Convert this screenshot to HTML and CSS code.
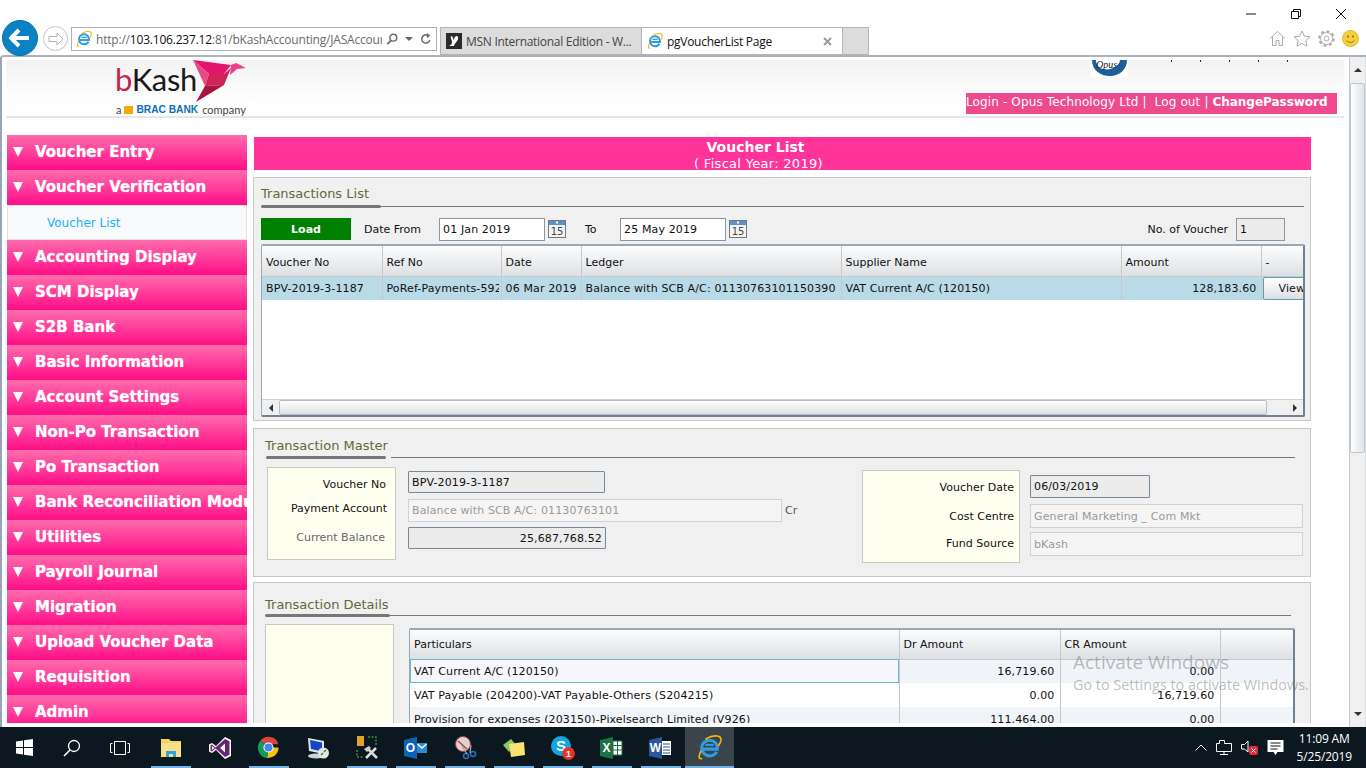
FILE: index.html
```html
<!DOCTYPE html>
<html lang="en">
<head>
  <meta charset="UTF-8" />
  <title>pgVoucherList Page</title>
  <link rel="stylesheet" href="styles.css">
</head>
<body>
  <svg class="defs" width="0" height="0" aria-hidden="true">
    <symbol id="ie" viewBox="0 0 24 24">
      <path d="M6 13.500h13.500c.4-5-3-8.500-7.300-8.500-4.400 0-7.700 3.300-7.700 7.500s3.300 7.500 7.700 7.500c3 0 5.300-1.300 6.600-3.800" fill="none" stroke="#2f9be3" stroke-width="3"/>
      <path d="M8 9.500h8" stroke="#2f9be3" stroke-width="2"/>
      <path d="M4 15C1 21 1.500 23.500 5 22.500M8 4c8-4.500 15-4 15 .5 0 2-1 4-2.500 6" fill="none" stroke="#f4b400" stroke-width="1.600"/>
    </symbol>
    <symbol id="cal" viewBox="0 0 18 18">
      <rect x=".5" y=".5" width="17" height="17" fill="#f4f4f4" stroke="#777"/>
      <rect x="1" y="1" width="16" height="4" fill="#5b93c7"/>
      <rect x="8" y="1.500" width="2" height="2" fill="#fff"/>
      <text x="9" y="15" text-anchor="middle" class="cal-num">15</text>
    </symbol>
  </svg>

  <header class="chrome">
    <div class="caption">
      <svg width="12" height="12" viewBox="0 0 12 12"><path d="M1 6h10" stroke="#111"/></svg>
      <svg width="12" height="12" viewBox="0 0 12 12"><path d="M1.500 3.500h7v7h-7zM3.500 3.500v-2h7v7h-2" fill="none" stroke="#111"/></svg>
      <svg width="12" height="12" viewBox="0 0 12 12"><path d="M1 1l10 10M11 1L1 11" stroke="#111"/></svg>
    </div>
    <div class="toolbar">
      <div class="back">
        <svg width="22" height="20" viewBox="0 0 22 20"><path d="M10 2l-8 8 8 8M2 10h18" fill="none" stroke="#fff" stroke-width="4"/></svg>
      </div>
      <div class="forward">
        <svg width="16" height="14" viewBox="0 0 16 14"><path d="M9 1l6 6-6 6v-3.500H1v-5h8z" fill="#fff" stroke="#b4b4b4"/></svg>
      </div>
      <div class="address">
        <svg class="addr-ie" width="16" height="16"><use href="#ie"/></svg>
        <span class="url">http://<b>103.106.237.12</b>:81/bKashAccounting/JASAccour</span>
        <svg width="14" height="14" viewBox="0 0 14 14"><circle cx="8.500" cy="5.500" r="4" fill="none" stroke="#666" stroke-width="1.600"/><path d="M6 8.500l-4.500 4.500" stroke="#666" stroke-width="2"/></svg>
        <span class="addr-caret"></span>
        <svg width="14" height="14" viewBox="0 0 14 14"><path d="M11.500 8A4.800 4.800 0 1 1 9.500 3" fill="none" stroke="#666" stroke-width="1.700"/><path d="M8 0v6l4-3z" fill="#666"/></svg>
      </div>
      <div class="tabs">
        <div class="tab">
          <svg width="16" height="16" viewBox="0 0 16 16"><rect width="16" height="16" fill="#2b2b2b"/><path d="M3 13c2-1 3-2 3-4S4 5 5 3c2 0 2 3 3 4 0-2 1-4 3-4 2 1 1 4 0 5-1 2-3 3-3 5z" fill="#fff"/></svg>
          <span>MSN International Edition - W...</span>
        </div>
        <div class="tab tab-active">
          <svg width="16" height="16"><use href="#ie"/></svg>
          <span>pgVoucherList Page</span>
          <svg class="tab-close" width="9" height="9" viewBox="0 0 9 9"><path d="M1 1l7 7M8 1L1 8" stroke="#999" stroke-width="1.800"/></svg>
        </div>
        <div class="tab tab-new"></div>
      </div>
      <div class="tools">
        <svg width="17" height="17" viewBox="0 0 17 17"><path d="M1 8.500L8.500 1.500 16 8.500M3.500 7v8.500h3.500v-5h3v5h3.500V7" fill="none" stroke="#aaa"/></svg>
        <svg width="18" height="17" viewBox="0 0 18 17"><path d="M9 1l2.400 5.200 5.600.6-4.200 3.800 1.200 5.600L9 13.400l-5 2.800 1.200-5.600L1 6.800l5.600-.6z" fill="none" stroke="#aaa"/></svg>
        <svg width="17" height="17" viewBox="0 0 17 17"><circle cx="8.500" cy="8.500" r="2.500" fill="none" stroke="#aaa"/><circle cx="8.500" cy="8.500" r="6" fill="none" stroke="#aaa" stroke-width="1"/><circle cx="8.500" cy="8.500" r="7.300" fill="none" stroke="#aaa" stroke-width="2" stroke-dasharray="2.900 2.800"/></svg>
        <svg width="17" height="17" viewBox="0 0 17 17"><circle cx="8.500" cy="8.500" r="8" fill="#f6cf3e" stroke="#e3b52a"/><circle cx="6" cy="6.500" r="1" fill="#8a6d10"/><circle cx="11" cy="6.500" r="1" fill="#8a6d10"/><path d="M4.500 10.500c2 2.500 6 2.500 8 0" fill="none" stroke="#8a6d10"/></svg>
      </div>
    </div>
  </header>

  <div class="viewport">
    <div class="page">
      <div class="site-head">
        <div class="logo">
          <div class="logo-top">
            <span class="logo-word"><em>b</em>Kash</span>
            <svg width="56" height="43" viewBox="0 0 56 43">
              <path d="M2 0l38 5-7 9H18z" fill="#e3146e"/>
              <path d="M40 5l5-2 10 5-9 1-7 6z" fill="#ee3f86"/>
              <path d="M2 0l16 14-4 12z" fill="#e94a80"/>
              <path d="M14 26l4-12h15l7-6-7 17z" fill="#cf2359"/>
              <path d="M14 26l19-1L5 42z" fill="#a81442"/>
            </svg>
          </div>
          <div class="logo-sub">a <i class="brac-mark"></i><b>BRAC BANK</b> company</div>
        </div>
        <div class="head-right">
          <div class="opus-row">
            <svg width="38" height="17" viewBox="0 0 38 17"><rect width="38" height="17" fill="#fff"/><path d="M2 0C2 10 10 16 20 16 30 16 37 9 37 0H30C30 5 22 11 13 9 8 8 6 4 6 0z" fill="#1d5f96"/><text x="6" y="8" class="opus-text">Opus</text></svg>
            <span class="opus-cut"></span>
          </div>
          <div class="login-bar">Login - Opus Technology Ltd |&nbsp; Log out | <b>ChangePassword</b></div>
        </div>
      </div>

      <div class="page-body">
        <nav class="menu">
          <a class="menu-item">Voucher Entry</a>
          <a class="menu-item">Voucher Verification</a>
          <a class="submenu-item">Voucher List</a>
          <a class="menu-item">Accounting Display</a>
          <a class="menu-item">SCM Display</a>
          <a class="menu-item">S2B Bank</a>
          <a class="menu-item">Basic Information</a>
          <a class="menu-item">Account Settings</a>
          <a class="menu-item">Non-Po Transaction</a>
          <a class="menu-item">Po Transaction</a>
          <a class="menu-item">Bank Reconciliation Module</a>
          <a class="menu-item">Utilities</a>
          <a class="menu-item">Payroll Journal</a>
          <a class="menu-item">Migration</a>
          <a class="menu-item">Upload Voucher Data</a>
          <a class="menu-item">Requisition</a>
          <a class="menu-item">Admin</a>
        </nav>

        <main class="content">
          <div class="page-title">
            <strong>Voucher List</strong>
            <span>( Fiscal Year: 2019)</span>
          </div>

          <section class="panel panel-list">
            <h2>Transactions List</h2>
            <div class="rule"><i></i><b></b></div>
            <div class="filter-row">
              <button class="btn-load">Load</button>
              <label class="lbl-from">Date From</label>
              <div class="field date-field">01 Jan 2019</div>
              <svg class="cal-icon" width="18" height="18"><use href="#cal"/></svg>
              <label class="lbl-to">To</label>
              <div class="field date-field">25 May 2019</div>
              <svg class="cal-icon" width="18" height="18"><use href="#cal"/></svg>
              <label class="lbl-count">No. of Voucher</label>
              <div class="field count-field">1</div>
            </div>
            <div class="grid list-grid">
              <div class="grid-scroll">
                <table>
                  <colgroup>
                    <col style="width:120px"><col style="width:119px"><col style="width:80px"><col style="width:260px"><col style="width:280px"><col style="width:140px"><col style="width:42px">
                  </colgroup>
                  <thead>
                    <tr><th>Voucher No</th><th>Ref No</th><th>Date</th><th>Ledger</th><th>Supplier Name</th><th>Amount</th><th>-</th></tr>
                  </thead>
                  <tbody>
                    <tr class="row-selected">
                      <td>BPV-2019-3-1187</td>
                      <td><span class="clip">PoRef-Payments-592</span></td>
                      <td>06 Mar 2019</td>
                      <td>Balance with SCB A/C: 01130763101150390</td>
                      <td>VAT Current A/C (120150)</td>
                      <td class="num">128,183.60</td>
                      <td class="cell-btn"><span class="btn-view">View</span></td>
                    </tr>
                  </tbody>
                </table>
              </div>
              <div class="hscroll">
                <span class="hscroll-btn"><i class="arrow-left"></i></span>
                <span class="hscroll-thumb"></span>
                <span class="hscroll-btn"><i class="arrow-right"></i></span>
              </div>
            </div>
          </section>

          <section class="panel panel-master">
            <h2>Transaction Master</h2>
            <div class="rule rule-gap"><i></i><b></b></div>
            <div class="master-row">
              <div class="master-group">
                <div class="info-box box-left">
                  <p class="l1">Voucher No</p>
                  <p class="l2">Payment Account</p>
                  <p class="l3 muted">Current Balance</p>
                </div>
                <div class="fields-left">
                  <div class="field locked w197">BPV-2019-3-1187</div>
                  <div class="field-line">
                    <div class="field disabled w374">Balance with SCB A/C: 01130763101</div>
                    <span class="cr">Cr</span>
                  </div>
                  <div class="field locked w198 num">25,687,768.52</div>
                </div>
              </div>
              <div class="master-group group-right">
                <div class="info-box box-right">
                  <p class="r1">Voucher Date</p>
                  <p class="r2">Cost Centre</p>
                  <p class="r3">Fund Source</p>
                </div>
                <div class="fields-right">
                  <div class="field locked w120">06/03/2019</div>
                  <div class="field disabled w273">General Marketing _ Com Mkt</div>
                  <div class="field disabled w273">bKash</div>
                </div>
              </div>
            </div>
          </section>

          <section class="panel panel-details">
            <h2>Transaction Details</h2>
            <div class="rule"><i></i><b></b></div>
            <div class="details-row">
              <div class="info-box box-details"></div>
              <div class="grid details-grid">
                <table>
                  <colgroup>
                    <col style="width:489px"><col style="width:161px"><col style="width:160px"><col style="width:74px">
                  </colgroup>
                  <thead>
                    <tr><th>Particulars</th><th>Dr Amount</th><th>CR Amount</th><th></th></tr>
                  </thead>
                  <tbody>
                    <tr class="row-alt">
                      <td class="cell-focus">VAT Current A/C (120150)</td>
                      <td class="num">16,719.60</td><td class="num">0.00</td><td></td>
                    </tr>
                    <tr>
                      <td>VAT Payable (204200)-VAT Payable-Others (S204215)</td>
                      <td class="num">0.00</td><td class="num">16,719.60</td><td></td>
                    </tr>
                    <tr class="row-alt">
                      <td>Provision for expenses (203150)-Pixelsearch Limited (V926)</td>
                      <td class="num">111,464.00</td><td class="num">0.00</td><td></td>
                    </tr>
                  </tbody>
                </table>
              </div>
            </div>
          </section>
        </main>
      </div>
    </div>

    <div class="vscroll">
      <span class="vscroll-btn"><i class="arrow-up"></i></span>
      <span class="vscroll-thumb"></span>
      <span class="vscroll-btn vscroll-down"><i class="arrow-down"></i></span>
    </div>

    <div class="activate">
      <div class="activate-title">Activate Windows</div>
      <div class="activate-sub">Go to Settings to activate Windows.</div>
    </div>
  </div>

  <footer class="taskbar">
    <div class="task-cell">
      <svg width="17" height="17" viewBox="0 0 17 17"><path d="M0 2.500l7-1v6.500H0zM8 1.300L17 0v8H8zM0 9h7v6.500l-7-1zM8 9h9v8l-9-1.300z" fill="#fff"/></svg>
    </div>
    <div class="task-cell">
      <svg width="18" height="18" viewBox="0 0 18 18"><circle cx="11" cy="7" r="5.500" fill="none" stroke="#fff" stroke-width="1.300"/><path d="M7 11l-6 6" stroke="#fff" stroke-width="1.600"/></svg>
    </div>
    <div class="task-cell">
      <svg width="20" height="14" viewBox="0 0 20 14"><path d="M4.500.5h11v13h-11zM2.500 2.500H.5v9h2M17.500 2.500h2v9h-2" fill="none" stroke="#fff"/></svg>
    </div>
    <div class="pinned">
      <div class="task-cell open">
        <svg width="22" height="20" viewBox="0 0 22 20"><path d="M1 1h8l2 2h10v16H1z" fill="#f6d365"/><path d="M1 5h20v14H1z" fill="#fbe08a"/><path d="M6 19v-6h10v6h-3v-3H9v3z" fill="#2aa5e0"/></svg>
      </div>
      <div class="task-cell">
        <svg width="24" height="24" viewBox="0 0 24 24"><path d="M17 1l6 3v16l-6 3L8 14l-4 3-3-1.500v-7L4 7l4 3z" fill="#fff"/><path d="M17 3l4.500 2.200v13.600L17 21 7.500 12.500 4 15.500 2.500 14.700V9.300L4 8.500l3.500 3z" fill="#68217a"/><path d="M17 7.500v9L12 12zM4 10l2.500 2L4 14z" fill="#fff"/></svg>
      </div>
      <div class="task-cell open">
        <svg width="23" height="23" viewBox="0 0 24 24"><path d="M12 12L3.500 5A11 11 0 0 1 22.500 8.500H12z" fill="#db4437"/><path d="M12 12h10.500A11 11 0 0 1 10.500 23z" fill="#f4c20d"/><path d="M12 12l-1.500 11A11 11 0 0 1 3.500 5z" fill="#0f9d58"/><circle cx="12" cy="12" r="5.300" fill="#fff"/><circle cx="12" cy="12" r="4.200" fill="#4285f4"/></svg>
      </div>
      <div class="task-cell">
        <svg width="24" height="24" viewBox="0 0 24 24"><path d="M2 2l16 3v13L3 15z" fill="#dfe3ea"/><path d="M4 4l12 2.500v9L5 13z" fill="#1546c2"/><ellipse cx="10" cy="20" rx="8" ry="2.500" fill="#cfd3d8"/><circle cx="17.500" cy="17" r="5.500" fill="#e4e6e2"/><path d="M15 19l2-2M18 16l2-2" stroke="#2c8f3c" stroke-width="1.500"/></svg>
      </div>
      <div class="task-cell open">
        <svg width="24" height="26" viewBox="0 0 24 26"><rect x="2" y="1" width="7" height="10" fill="#e0a526"/><path d="M2 15v7h7M13 2h8v8" fill="none" stroke="#3b8f3b" stroke-dasharray="2 1.500" stroke-width="1.500"/><path d="M12 13l10 10M21 13l-10 10" stroke="#ddd" stroke-width="2.500"/><path d="M9 14l5-3 2 2-4 4z" fill="#ccc"/></svg>
      </div>
      <div class="task-cell open">
        <svg width="23" height="22" viewBox="0 0 23 22"><path d="M0 3l13-3v22L0 19z" fill="#0a64b4"/><text x="6.500" y="15" text-anchor="middle" class="tile-letter">O</text><rect x="13" y="6" width="10" height="10" fill="#2a8ad4"/><path d="M13.500 7l4.500 4 4.500-4" fill="none" stroke="#fff" stroke-width="1.500"/></svg>
      </div>
      <div class="task-cell open">
        <svg width="24" height="24" viewBox="0 0 24 24"><circle cx="10" cy="8" r="7.500" fill="#d8d4d4" stroke="#b33"/><path d="M5 5l9 8" stroke="#c33" stroke-width="1.500"/><circle cx="13" cy="20" r="2.500" fill="none" stroke="#2a6fb5" stroke-width="1.500"/><circle cx="20" cy="18" r="2.500" fill="none" stroke="#2a6fb5" stroke-width="1.500"/><path d="M9 10l5 8M18 9l-1 8" stroke="#8aa" stroke-width="1.300"/></svg>
      </div>
      <div class="task-cell open">
        <svg width="24" height="20" viewBox="0 0 24 20"><path d="M1 7l8-6 5 6-7 7z" fill="#8cc56b"/><path d="M7 6l15-2 1 13-14 2z" fill="#fbe36f"/></svg>
      </div>
      <div class="task-cell open">
        <svg width="26" height="26" viewBox="0 0 26 26"><circle cx="11" cy="11" r="10" fill="#12a5e0"/><text x="11" y="16" text-anchor="middle" class="tile-letter big">S</text><circle cx="18.500" cy="18.500" r="6.500" fill="#e8322b"/><text x="18.500" y="22" text-anchor="middle" class="tile-letter small">1</text></svg>
      </div>
      <div class="task-cell open">
        <svg width="23" height="22" viewBox="0 0 23 22"><path d="M0 3l13-3v22L0 19z" fill="#1e7145"/><text x="6.500" y="15" text-anchor="middle" class="tile-letter">X</text><path d="M13 4h9v14h-9z" fill="#fff" stroke="#1e7145"/><path d="M13 8.500h9M13 13h9M17.500 4v14" stroke="#1e7145"/></svg>
      </div>
      <div class="task-cell open">
        <svg width="23" height="22" viewBox="0 0 23 22"><path d="M0 3l13-3v22L0 19z" fill="#2b579a"/><text x="6.500" y="15" text-anchor="middle" class="tile-letter">W</text><path d="M13 4h9v14h-9z" fill="#fff"/><path d="M14 7h7M14 10h7M14 13h7M14 16h7" stroke="#2b579a"/></svg>
      </div>
      <div class="task-cell open active">
        <svg width="25" height="25"><use href="#ie"/></svg>
      </div>
    </div>
    <div class="tray">
      <svg width="12" height="7" viewBox="0 0 12 7"><path d="M.5 6.500L6 1l5.500 5.500" fill="none" stroke="#fff"/></svg>
      <svg width="16" height="15" viewBox="0 0 16 15"><path d="M.5 3.500h3V.5h5v3h7v8h-15zM8 11.500v3M4 14.500h8" fill="none" stroke="#fff"/></svg>
      <svg width="17" height="15" viewBox="0 0 17 15"><path d="M.5 4.500h3L7 1v11L3.500 9h-3z" fill="none" stroke="#fff"/><rect x="8" y="6" width="9" height="9" rx="2" fill="#e02b3a"/><path d="M10.500 8.500l4 4M14.500 8.500l-4 4" stroke="#fff"/></svg>
      <svg width="17" height="16" viewBox="0 0 16 16"><path d="M0 0h16v12h-6l-2 3-2-3H0z" fill="#fff"/><path d="M3 3h10M3 6h10M3 9h7" stroke="#0d1a22"/></svg>
      <div class="clock">
        <span>11:09 AM</span>
        <span>5/25/2019</span>
      </div>
    </div>
  </footer>
</body>
</html>
```

FILE: styles.css
```css
* {
  box-sizing: border-box;
}

html,
body {
  margin: 0;
  height: 768px;
  overflow: hidden;
}

body {
  width: 1366px;
  display: flex;
  flex-direction: column;
  background: #fff;
  font-family: "DejaVu Sans", Verdana, sans-serif;
  font-size: 11px;
  color: #111;
}

.defs {
  position: absolute;
}

.cal-num {
  font: 10px "DejaVu Sans", sans-serif;
  fill: #444;
}

/* browser chrome */
.chrome {
  height: 55px;
  flex: none;
  font-family: "Open Sans", sans-serif;
}

.caption {
  height: 20px;
  display: flex;
  justify-content: flex-end;
  align-items: flex-end;
  gap: 33px;
  padding-right: 19px;
}

.toolbar {
  height: 35px;
  display: flex;
  position: relative;
}

.back {
  width: 36px;
  height: 36px;
  margin-left: 2px;
  border-radius: 50%;
  background: #0a82c4;
  border: 1px solid #0a6ea6;
  display: flex;
  align-items: center;
  justify-content: center;
  z-index: 2;
}

.forward {
  width: 25px;
  height: 25px;
  margin: 6px 0 0 5px;
  border-radius: 50%;
  border: 1px solid #c4c4c4;
  display: flex;
  align-items: center;
  justify-content: center;
}

.address {
  width: 366px;
  height: 24px;
  margin: 7px 0 0 3px;
  border: 1px solid #b0b0b0;
  display: flex;
  align-items: center;
  padding: 0 4px;
  gap: 4px;
  font-size: 12px;
  color: #6b6b6b;
  overflow: hidden;
}

.addr-ie {
  flex: none;
}

.url {
  width: 286px;
  flex: none;
  white-space: nowrap;
  overflow: hidden;
  letter-spacing: -.2px;
}

.url b {
  font-weight: 400;
  color: #111;
}

.addr-caret {
  width: 0;
  height: 0;
  border: 4px solid transparent;
  border-top-color: #666;
  border-bottom: 0;
  margin: 0 3px;
}

.tabs {
  margin: 7px 0 0 3px;
  height: 28px;
  display: flex;
  border-bottom: 1px solid #b5b5b5;
}

.tab {
  width: 201px;
  border: 1px solid #b5b5b5;
  border-bottom: 0;
  border-right: 0;
  background: #dcdcdc;
  display: flex;
  align-items: center;
  gap: 4px;
  padding-left: 5px;
  font-size: 12px;
  letter-spacing: -.28px;
  color: #444;
  white-space: nowrap;
}

.tab-active {
  background: #fff;
  color: #111;
  position: relative;
}

.tab-close {
  margin-left: auto;
  margin-right: 10px;
}

.tab-new {
  width: 27px;
  border-right: 1px solid #b5b5b5;
}

.tools {
  margin-left: auto;
  padding: 10px 7px 0 0;
  display: flex;
  gap: 7px;
  align-items: flex-start;
}

/* page area */
.viewport {
  height: 672px;
  flex: none;
  display: flex;
  position: relative;
  border-top: 2px solid #aab3bc;
  border-left: 2px solid #97a5b5;
  border-top-left-radius: 4px;
}

.page {
  width: 1347px;
  flex: none;
  padding-top: 3px;
  overflow: hidden;
}

.site-head {
  height: 58px;
  width: 1338px;
  margin-left: 4px;
  display: flex;
  justify-content: space-between;
  background: linear-gradient(#f3f3f3, #fff 85%);
  border-bottom: 2px solid #e6e6e6;
}

.logo {
  margin-left: 109px;
  height: 56px;
  font-family: "Lato", sans-serif;
}

.logo-top {
  height: 43px;
  display: flex;
  overflow: hidden;
}

.logo-word {
  font-family: "Lato", sans-serif;
  font-size: 31px;
  line-height: 39px;
  letter-spacing: -.3px;
  color: #1a1a1a;
  width: 76px;
}

.logo-word em {
  font-style: normal;
  color: #c2264d;
}

.logo-sub {
  display: flex;
  align-items: center;
  gap: 3px;
  font-size: 11px;
  line-height: 12px;
  color: #444;
  margin: 1px 0 0 1px;
  white-space: nowrap;
}

.logo-sub b {
  font-family: "Liberation Sans", sans-serif;
  font-size: 10.200px;
  color: #0a6fb7;
  margin-right: 1px;
}

.brac-mark {
  width: 9px;
  height: 8px;
  background: #f2a900;
}

.head-right {
  margin-right: 7px;
  width: 371px;
}

.opus-row {
  height: 33px;
  display: flex;
  align-items: flex-start;
  padding-left: 124px;
}

.opus-text {
  font: italic 10px "Liberation Serif", serif;
  fill: #222;
}

.opus-cut {
  width: 135px;
  height: 2px;
  margin-left: 43px;
  background-image: repeating-linear-gradient(90deg, #222 0 1px, transparent 1px 29px);
}

.login-bar {
  height: 21px;
  background: #ef4a8e;
  color: #fff;
  font-size: 12px;
  letter-spacing: .13px;
  line-height: 18px;
  white-space: pre;
}

.login-bar b {
  font-weight: 700;
  letter-spacing: -.03px;
}

.page-body {
  display: flex;
  height: 588px;
  margin-top: 17px;
  margin-left: 5px;
  overflow: hidden;
}

/* left menu */
.menu {
  width: 240px;
  flex: none;
}

.menu-item {
  display: block;
  height: 35px;
  padding-left: 28px;
  position: relative;
  background: linear-gradient(#ff6cab, #ff3d9b 50%, #ff0e86);
  color: #fff;
  font-size: 15px;
  font-weight: 700;
  line-height: 35px;
  white-space: nowrap;
  overflow: hidden;
  text-shadow: 0 0 1px #ffd0e4;
}

.menu-item::before {
  content: "";
  position: absolute;
  left: 6px;
  top: 12px;
  border-style: solid;
  border-width: 10px 5px 0;
  border-color: #fff transparent transparent;
}

.submenu-item {
  display: block;
  height: 35px;
  padding-left: 39px;
  background: #f8f9fb;
  border: 1px solid #e2e2e2;
  color: #1ab2f5;
  font-size: 12px;
  line-height: 35px;
}

/* content */
.content {
  width: 1058px;
  margin-left: 6px;
  flex: none;
}

.page-title {
  height: 33px;
  margin: 2px 0 0 1px;
  padding-right: 54px;
  background: #ff3399;
  color: #fff;
  text-align: center;
  display: flex;
  flex-direction: column;
  overflow: hidden;
}

.page-title strong {
  font-size: 14px;
  line-height: 20px;
}

.page-title span {
  padding-left: 6px;
  font-size: 13px;
  line-height: 13px;
  letter-spacing: .3px;
}

.panel {
  background: #f0f0f0;
  border: 1px solid #c8c8c8;
  margin-top: 7px;
  padding: 7px 6px 0 7px;
}

.panel h2 {
  margin: 0;
  font-size: 13px;
  font-weight: 400;
  line-height: 17px;
  color: #5f6b35;
}

.rule {
  height: 3px;
  margin-top: 3px;
  display: flex;
  align-items: center;
}

.rule i {
  width: 120px;
  height: 3px;
  background: #777;
  border-radius: 2px;
}

.rule b {
  flex: 1;
  height: 1px;
  background: #777;
}

.rule-gap {
  margin-left: 1px;
  margin-right: 8px;
}

.rule-gap i {
  margin-right: 5px;
}

.field {
  height: 23px;
  background: #fff;
  border: 1px solid #8697a8;
  padding-left: 3px;
  font-size: 11px;
  letter-spacing: .13px;
  line-height: 21px;
  white-space: nowrap;
  overflow: hidden;
}

.field.num {
  text-align: right;
  padding-right: 3px;
}

.locked {
  background: #ececec;
  border-color: #76899b;
  border-radius: 1px;
}

.disabled {
  background: #f5f5f5;
  border-color: #d2d2d2;
  color: #9a9a9a;
}

/* transactions list */
.panel-list {
  height: 244px;
}

.filter-row {
  height: 24px;
  margin-top: 9px;
  display: flex;
  align-items: center;
}

.btn-load {
  width: 90px;
  height: 22px;
  padding: 0;
  background: #008000;
  border: 0;
  color: #fff;
  font: 700 11px "DejaVu Sans", sans-serif;
}

.lbl-from {
  margin-left: 13px;
  width: 75px;
}

.date-field {
  width: 106px;
}

.cal-icon {
  margin-left: 3px;
  flex: none;
}

.lbl-to {
  margin-left: 19px;
  width: 35px;
}

.lbl-count {
  margin-left: auto;
  margin-right: 8px;
  white-space: nowrap;
}

.count-field {
  width: 49px;
  background: #ececec;
  margin-right: 19px;
}

.grid {
  background: #fff;
  border-width: 2px 2px 2px 1px;
  border-style: solid;
  border-color: #9aa8b6 #6f8192 #6f8192 #9aa8b6;
  border-radius: 2px;
}

.grid table {
  border-collapse: collapse;
  table-layout: fixed;
}

.grid th {
  height: 30px;
  padding: 0 4px;
  background: linear-gradient(#fbfcfc, #dde0e3);
  border-right: 1px solid #c8c8c8;
  border-bottom: 1px solid #c8c8c8;
  text-align: left;
  font-size: 11px;
  font-weight: 400;
}

.grid td {
  height: 24px;
  padding: 0 4px;
  border-right: 1px solid #c8c8c8;
  letter-spacing: .13px;
  white-space: nowrap;
  overflow: hidden;
}

.grid td.num {
  text-align: right;
}

.list-grid {
  width: 1044px;
  height: 173px;
  margin-top: 3px;
  display: flex;
  flex-direction: column;
}

.list-grid table {
  width: 1041px;
}

.list-grid th {
  padding-top: 3px;
}

.clip {
  display: block;
  width: 112px;
  overflow: hidden;
}

.grid-scroll {
  flex: 1;
  overflow: hidden;
}

.row-selected td {
  background: #b9dbe7;
}

td.cell-btn {
  padding: 0 0 0 1px;
  border-right: 0;
}

.btn-view {
  display: block;
  width: 48px;
  height: 23px;
  padding-left: 15px;
  background: linear-gradient(#fff, #dcdfe2);
  border: 1px solid #5d9db5;
  border-radius: 2px;
  line-height: 21px;
}

.hscroll {
  height: 16px;
  display: flex;
  align-items: stretch;
  background: #f0f0f0;
  border-top: 1px solid #d0d0d0;
}

.hscroll-btn {
  width: 17px;
  flex: none;
  display: flex;
  align-items: center;
  justify-content: center;
}

.hscroll-thumb {
  flex: 1;
  margin-right: 19px;
  background: linear-gradient(#fff, #dde1e4);
  border: 1px solid #b8bec4;
  border-radius: 2px;
}

.arrow-left,
.arrow-right,
.arrow-up,
.arrow-down {
  width: 0;
  height: 0;
  border: 4px solid transparent;
}

.arrow-left {
  border-right-color: #333;
  border-left: 0;
}

.arrow-right {
  border-left-color: #333;
  border-right: 0;
}

.arrow-up {
  border-bottom-color: #333;
  border-top: 0;
}

.arrow-down {
  border-top-color: #333;
  border-bottom: 0;
}

/* transaction master */
.panel-master {
  height: 149px;
  padding: 8px 7px 0 11px;
}

.panel-master .rule {
  margin-top: 2px;
}

.master-row {
  display: flex;
  justify-content: space-between;
  margin-top: 8px;
}

.master-group {
  display: flex;
}

.info-box {
  background: #fffff0;
  border: 1px solid #c8c8c8;
}

.info-box p {
  margin: 0;
  text-align: right;
  line-height: 16px;
}

.box-left {
  width: 129px;
  height: 93px;
  margin-left: 2px;
  padding: 9px 9px 0 0;
}

.box-left .l2 {
  margin-top: 8px;
  margin-right: -1px;
}

.box-left .l3 {
  margin-top: 13px;
  margin-right: 1px;
}

.muted {
  color: #666;
}

.fields-left {
  margin-left: 12px;
  padding-top: 4px;
}

.field-line {
  display: flex;
  align-items: center;
  margin: 6px 0 5px;
}

.cr {
  margin-left: 3px;
  color: #555;
}

.w197 {
  width: 197px;
  height: 22px;
}

.w198 {
  width: 198px;
  height: 22px;
}

.w374 {
  width: 374px;
}

.group-right {
  padding-top: 3px;
}

.box-right {
  width: 158px;
  height: 93px;
  padding: 9px 5px 0 0;
}

.box-right .r2 {
  margin-top: 13px;
}

.box-right .r3 {
  margin-top: 11px;
}

.fields-right {
  margin-left: 10px;
  padding-top: 5px;
}

.w120 {
  width: 120px;
}

.w273 {
  width: 273px;
  height: 24px;
  line-height: 23px;
  margin-top: 6px;
}

.w273 + .w273 {
  margin-top: 4px;
}

/* transaction details */
.panel-details {
  height: 200px;
  margin-top: 5px;
  padding: 13px 19px 0 11px;
}

.panel-details .rule {
  margin-top: 1px;
}

.panel-details .rule i {
  width: 125px;
}

.details-row {
  display: flex;
  margin-top: 7px;
}

.box-details {
  width: 129px;
  height: 140px;
  flex: none;
}

.details-grid {
  width: 886px;
  height: 130px;
  flex: none;
  margin: 4px 0 0 15px;
  overflow: hidden;
}

.details-grid table {
  width: 884px;
}

.details-grid th {
  height: 29px;
}

.grid.details-grid td.num {
  padding-right: 5px;
}

.row-alt td {
  background: #f0f3f8;
}

td.cell-focus {
  background: #f5f7fb;
  outline: 1px solid #66b8cc;
  outline-offset: -1px;
  overflow: visible;
}

/* page scrollbar */
.vscroll {
  width: 17px;
  flex: none;
  display: flex;
  flex-direction: column;
  background: #f0f0f0;
  border-left: 1px solid #bfc6cc;
  border-right: 1px solid #dcdfe2;
}

.vscroll-btn {
  height: 26px;
  flex: none;
  display: flex;
  align-items: center;
  justify-content: center;
}

.vscroll-thumb {
  height: 370px;
  background: linear-gradient(90deg, #fff, #dfe3e7);
  border: 1px solid #c0c7cd;
  border-radius: 2px;
}

.vscroll-down {
  margin-top: auto;
}

.activate {
  position: absolute;
  left: 1071px;
  top: 593px;
  color: rgba(110, 110, 110, .45);
  font-family: "Open Sans", sans-serif;
  white-space: nowrap;
  pointer-events: none;
}

.activate-title {
  font-size: 19px;
  line-height: 24px;
}

.activate-sub {
  font-size: 14.400px;
  line-height: 22px;
}

/* taskbar */
.taskbar {
  height: 41px;
  flex: none;
  display: flex;
  background: #0c1820;
  color: #fff;
  font-family: "Open Sans", sans-serif;
}

.task-cell {
  width: 48px;
  height: 41px;
  display: flex;
  align-items: center;
  justify-content: center;
  flex: none;
}

.pinned {
  display: flex;
  margin-left: 2px;
}

.pinned .task-cell {
  width: 49px;
}

.pinned .open {
  background: linear-gradient(#6cb3e6, #6cb3e6) center bottom / 40px 2px no-repeat;
}

.pinned .active {
  background: linear-gradient(#6cb3e6, #6cb3e6) center bottom / 49px 2px no-repeat, #3a444b;
}

.tile-letter {
  font: 700 12px "Liberation Sans", sans-serif;
  fill: #fff;
}

.tile-letter.big {
  font-size: 15px;
}

.tile-letter.small {
  font-size: 9px;
}

.tray {
  margin-left: auto;
  display: flex;
  align-items: center;
  gap: 9px;
  padding-right: 14px;
}

.clock {
  margin-left: 4px;
  display: flex;
  flex-direction: column;
  align-items: center;
  font-size: 12px;
  letter-spacing: -.15px;
  line-height: 18px;
}
```
